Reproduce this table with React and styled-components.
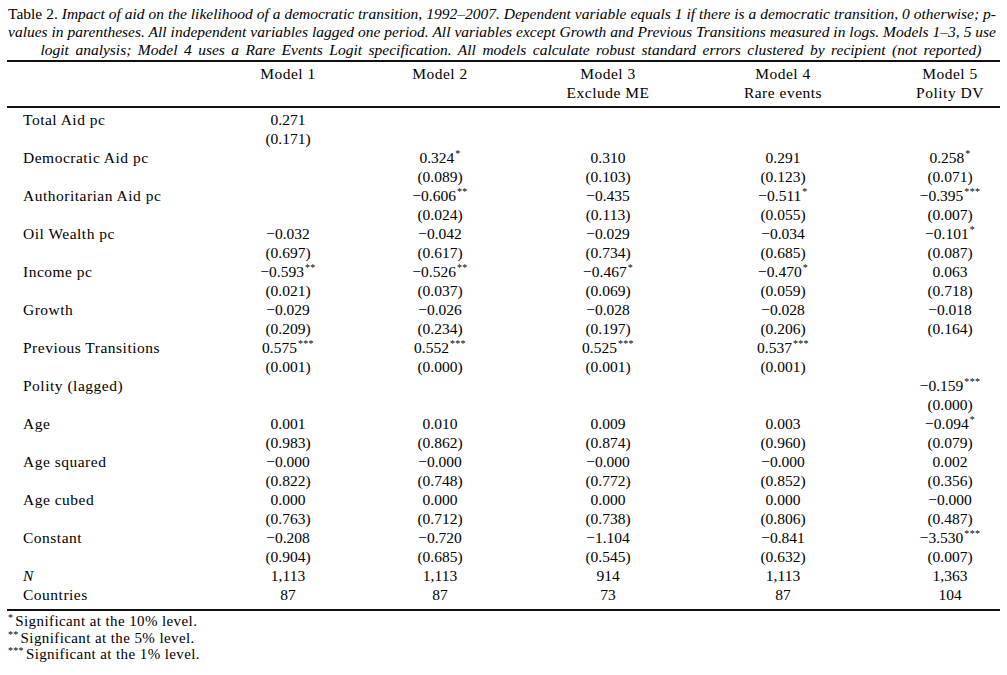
import React from "react";
import styled, { createGlobalStyle } from "styled-components";

const Global = createGlobalStyle`
  html, body { margin: 0; padding: 0; background: #fff; }
  body { font-family: "Liberation Serif", "Times New Roman", serif; color: #000; }
`;

const Page = styled.div`
  width: 993px;
  padding: 5px 0 0 7px;
`;

const Caption = styled.div`
  padding: 0 4px 0 1px;
  font-size: 15.5px;
  line-height: 18px;
`;

const CaptionLine = styled.div`
  text-align: ${(p) => (p.$last ? "center" : "justify")};
  text-align-last: ${(p) => (p.$last ? "center" : "justify")};
  word-spacing: ${(p) => (p.$last ? "2.6px" : "0")};
  padding-left: ${(p) => (p.$last ? "18px" : "0")};
  white-space: nowrap;
  font-style: italic;
`;

const Upright = styled.span`
  font-style: normal;
`;

const Rule = styled.div`
  height: 2px;
  background: #111;
  margin-top: ${(p) => p.$top || 0}px;
`;

const COLS = "205px 152px 152px 184px 166px 134px";

const Row = styled.div`
  display: grid;
  grid-template-columns: ${COLS};
  font-size: 15.5px;
  line-height: 19px;
  & > div:last-child {
    padding-left: 34px;
  }
`;

const Header = styled.div`
  padding: 2px 0 4px;
`;

const Body = styled.div`
  padding: 2px 0 5px;
`;

const HeadCell = styled.div`
  text-align: center;
  letter-spacing: 0.5px;
  line-height: 19px;
`;

const Label = styled.div`
  padding-left: 16px;
  letter-spacing: 0.5px;
  font-style: ${(p) => (p.$italic ? "italic" : "normal")};
  white-space: nowrap;
`;

const Cell = styled.div`
  text-align: center;
  white-space: nowrap;
`;

const Sup = styled.sup`
  font-size: 10px;
  line-height: 0;
  vertical-align: 6px;
  letter-spacing: 0.3px;
  margin-left: 1px;
`;

const Notes = styled.div`
  padding: 2px 0 0 1px;
  font-size: 15px;
  line-height: 16.5px;
  letter-spacing: 0.4px;
`;

const Note = styled.div`
  white-space: nowrap;
`;

const NoteMark = styled.sup`
  font-size: 10px;
  line-height: 0;
  vertical-align: 5px;
  letter-spacing: 0.3px;
  margin-right: 2px;
`;

const m = "\u2212";

const data = [
  ["Total Aid pc", [["0.271", "", "(0.171)"], null, null, null, null]],
  [
    "Democratic Aid pc",
    [null, ["0.324", "*", "(0.089)"], ["0.310", "", "(0.103)"], ["0.291", "", "(0.123)"], ["0.258", "*", "(0.071)"]],
  ],
  [
    "Authoritarian Aid pc",
    [null, [m + "0.606", "**", "(0.024)"], [m + "0.435", "", "(0.113)"], [m + "0.511", "*", "(0.055)"], [m + "0.395", "***", "(0.007)"]],
  ],
  [
    "Oil Wealth pc",
    [[m + "0.032", "", "(0.697)"], [m + "0.042", "", "(0.617)"], [m + "0.029", "", "(0.734)"], [m + "0.034", "", "(0.685)"], [m + "0.101", "*", "(0.087)"]],
  ],
  [
    "Income pc",
    [[m + "0.593", "**", "(0.021)"], [m + "0.526", "**", "(0.037)"], [m + "0.467", "*", "(0.069)"], [m + "0.470", "*", "(0.059)"], ["0.063", "", "(0.718)"]],
  ],
  [
    "Growth",
    [[m + "0.029", "", "(0.209)"], [m + "0.026", "", "(0.234)"], [m + "0.028", "", "(0.197)"], [m + "0.028", "", "(0.206)"], [m + "0.018", "", "(0.164)"]],
  ],
  [
    "Previous Transitions",
    [["0.575", "***", "(0.001)"], ["0.552", "***", "(0.000)"], ["0.525", "***", "(0.001)"], ["0.537", "***", "(0.001)"], null],
  ],
  ["Polity (lagged)", [null, null, null, null, [m + "0.159", "***", "(0.000)"]]],
  [
    "Age",
    [["0.001", "", "(0.983)"], ["0.010", "", "(0.862)"], ["0.009", "", "(0.874)"], ["0.003", "", "(0.960)"], [m + "0.094", "*", "(0.079)"]],
  ],
  [
    "Age squared",
    [[m + "0.000", "", "(0.822)"], [m + "0.000", "", "(0.748)"], [m + "0.000", "", "(0.772)"], [m + "0.000", "", "(0.852)"], ["0.002", "", "(0.356)"]],
  ],
  [
    "Age cubed",
    [["0.000", "", "(0.763)"], ["0.000", "", "(0.712)"], ["0.000", "", "(0.738)"], ["0.000", "", "(0.806)"], [m + "0.000", "", "(0.487)"]],
  ],
  [
    "Constant",
    [[m + "0.208", "", "(0.904)"], [m + "0.720", "", "(0.685)"], [m + "1.104", "", "(0.545)"], [m + "0.841", "", "(0.632)"], [m + "3.530", "***", "(0.007)"]],
  ],
];

const counts = [
  ["N", true, ["1,113", "1,113", "914", "1,113", "1,363"]],
  ["Countries", false, ["87", "87", "73", "87", "104"]],
];

const heads = [
  ["Model 1", ""],
  ["Model 2", ""],
  ["Model 3", "Exclude ME"],
  ["Model 4", "Rare events"],
  ["Model 5", "Polity DV"],
];

export default function App() {
  return (
    <Page>
      <Global />
      <Caption>
        <CaptionLine>
          <Upright>Table 2.</Upright> Impact of aid on the likelihood of a democratic transition, 1992–2007. Dependent
          variable equals 1 if there is a democratic transition, 0 otherwise; p-
        </CaptionLine>
        <CaptionLine>
          values in parentheses. All independent variables lagged one period. All variables except Growth and Previous
          Transitions measured in logs. Models 1–3, 5 use
        </CaptionLine>
        <CaptionLine $last>
          logit analysis; Model 4 uses a Rare Events Logit specification. All models calculate robust standard errors
          clustered by recipient (not reported)
        </CaptionLine>
      </Caption>
      <Rule $top={1} />
      <Header>
        <Row>
          <div />
          {heads.map(([a, b]) => (
            <HeadCell key={a}>
              {a}
              <br />
              {b || "\u00a0"}
            </HeadCell>
          ))}
        </Row>
      </Header>
      <Rule />
      <Body>
        {data.map(([label, vals]) => (
          <React.Fragment key={label}>
            <Row>
              <Label>{label}</Label>
              {vals.map((v, i) => (
                <Cell key={i}>
                  {v ? v[0] : ""}
                  {v && v[1] ? <Sup>{v[1]}</Sup> : null}
                </Cell>
              ))}
            </Row>
            <Row>
              <Label>{"\u00a0"}</Label>
              {vals.map((v, i) => (
                <Cell key={i}>{v ? v[2] : ""}</Cell>
              ))}
            </Row>
          </React.Fragment>
        ))}
        {counts.map(([label, it, vals]) => (
          <Row key={label}>
            <Label $italic={it}>{label}</Label>
            {vals.map((v, i) => (
              <Cell key={i}>{v}</Cell>
            ))}
          </Row>
        ))}
      </Body>
      <Rule />
      <Notes>
        <Note>
          <NoteMark>*</NoteMark>Significant at the 10% level.
        </Note>
        <Note>
          <NoteMark>**</NoteMark>Significant at the 5% level.
        </Note>
        <Note>
          <NoteMark>***</NoteMark>Significant at the 1% level.
        </Note>
      </Notes>
    </Page>
  );
}
